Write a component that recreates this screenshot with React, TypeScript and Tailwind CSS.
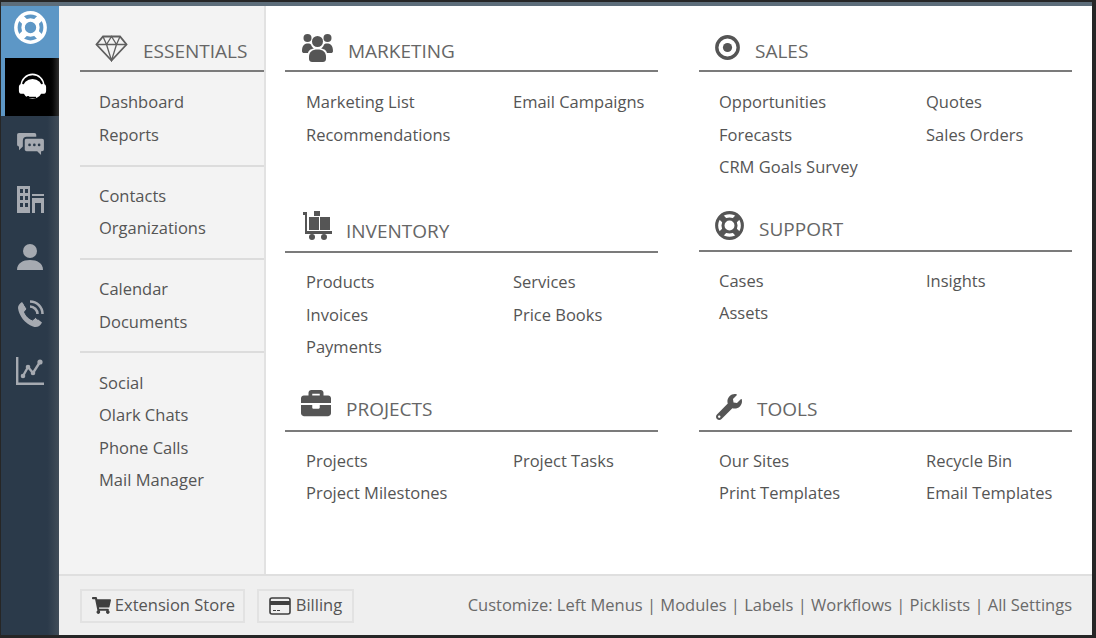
import React from "react";
import { FaBriefcase, FaShoppingCart, FaWrench } from "react-icons/fa";

const LifeRingIcon = ({ className }: { className: string }) => (
  <svg viewBox="0 0 32 32" className={className} fill="none" stroke="currentColor">
    <circle cx="16" cy="16" r="14.2" strokeWidth="3.4" />
    <circle cx="16" cy="16" r="7.2" strokeWidth="3.4" />
    <path d="M6 6 L11 11 M26 6 L21 11 M6 26 L11 21 M26 26 L21 21" strokeWidth="6.5" />
  </svg>
);

const HeadsetIcon = () => (
  <svg viewBox="0 0 32 32" className="w-[29px] h-[29px]">
    <path d="M3.5 14 A12.5 12.5 0 0 1 28.5 14" fill="none" stroke="#fff" strokeWidth="1.7" />
    <circle cx="16" cy="17.5" r="11" fill="#fff" />
    <rect x="1" y="12" width="7" height="11" rx="3.5" fill="#fff" />
    <rect x="24" y="12" width="7" height="11" rx="3.5" fill="#fff" />
    <path d="M11 27 H20" stroke="#000" strokeWidth="1.5" />
    <circle cx="11" cy="27" r="1.6" fill="#000" />
  </svg>
);

const ChatIcon = () => (
  <svg viewBox="0 0 30 24" className="w-[29px] h-[23px]" fill="#a6aab1">
    <path d="M3 1 H19 C20.5 1 21 2 21 3 V5 H11 C8.5 5 7 6.5 7 9 V15 L3 19 V15 C1.5 15 1 14 1 13 V3 C1 2 1.5 1 3 1Z" />
    <path d="M11 7 H27 C28.5 7 29 8 29 9 V18 C29 19.5 28 20 27 20 H26 V24 L22 20 H11 C9.5 20 9 19 9 18 V9 C9 8 9.5 7 11 7Z" />
    <circle cx="14" cy="13.5" r="1.4" fill="#2b3a4a" />
    <circle cx="19" cy="13.5" r="1.4" fill="#2b3a4a" />
    <circle cx="24" cy="13.5" r="1.4" fill="#2b3a4a" />
  </svg>
);

const BuildingIcon = () => (
  <svg viewBox="0 0 28 28" className="w-[28px] h-[28px]" fill="#a6aab1">
    <path
      fillRule="evenodd"
      d="M1 1 H14 V28 H1Z M4 4 V8 H7 V4Z M9 4 V8 H12 V4Z M4 11 V15 H7 V11Z M9 11 V15 H12 V11Z M4 18 V22 H7 V18Z M9 18 V22 H12 V18Z"
    />
    <path d="M16 9 H28 V11 H16Z" />
    <path fillRule="evenodd" d="M16 13 H28 V28 H25 V18 H19 V28 H16Z" />
  </svg>
);

const UserIcon = () => (
  <svg viewBox="0 0 28 28" className="w-[28px] h-[28px]" fill="#a6aab1">
    <circle cx="14" cy="8" r="7" />
    <path d="M1 27 C1 20 7 17 14 17 S27 20 27 27Z" />
  </svg>
);

const PhoneIcon = () => (
  <svg viewBox="0 0 28 28" className="w-[28px] h-[28px]">
    <path
      d="M6 2 L11 9 L8.5 12 C10 16 12.5 18.5 16.5 20 L19.5 17.5 L26 22.5 C24 26.5 20.5 28 17 26.5 C9 23.5 3 16 2 8 C2 5.5 3.5 3.5 6 2Z"
      fill="#a6aab1"
    />
    <path d="M8.5 5 L11 9 L8.5 12 C10 16 12.5 18.5 16.5 20 L19.5 17.5 L22 19.5" fill="none" stroke="#2b3a4a" strokeWidth="1" />
    <path d="M14 1.5 C21 1.5 26.5 7 26.5 14 M14 6.5 C18 6.5 21.5 10 21.5 14" fill="none" stroke="#a6aab1" strokeWidth="2.6" />
  </svg>
);

const ChartIcon = () => (
  <svg viewBox="0 0 28 28" className="w-[28px] h-[28px]" fill="none" stroke="#a6aab1">
    <path d="M1.2 0 V26.8 H28" strokeWidth="2.4" />
    <path d="M7 19 L12 10 L17 16 L24 5" strokeWidth="2.4" />
    <g fill="#a6aab1" stroke="none">
      <circle cx="7" cy="19" r="2.3" />
      <circle cx="12" cy="10" r="2.3" />
      <circle cx="17" cy="16" r="2.3" />
      <circle cx="24" cy="5" r="2.6" />
    </g>
  </svg>
);

const GemIcon = () => (
  <svg viewBox="0 0 33 27" className="w-[33px] h-[27px]" fill="none" stroke="#5f5f5f" strokeWidth="1.8">
    <path d="M8 1.5 H25 L31.5 9.5 L16.5 25.5 L1.5 9.5Z" />
    <path d="M1.5 9.5 H31.5 M8 1.5 L11.5 9.5 L16.5 25.5 L21.5 9.5 L25 1.5 M11.5 9.5 L16.5 1.5 L21.5 9.5" strokeWidth="1.3" />
  </svg>
);

const UsersIcon = () => (
  <svg viewBox="0 0 31 29" className="w-[31px] h-[29px]" fill="#555">
    <circle cx="5.5" cy="5" r="4" />
    <circle cx="25.5" cy="5" r="4" />
    <circle cx="15.5" cy="8.5" r="5.5" />
    <path d="M0 18 C0 12 3 10.5 6 10.5 C7.5 10.5 8.5 11 9 11.5 C9.5 13.5 11 15 12 15.5 C8 16 6.5 18 6 20 H2 C1 20 0 19.5 0 18Z" />
    <path d="M31 18 C31 12 28 10.5 25 10.5 C23.5 10.5 22.5 11 22 11.5 C21.5 13.5 20 15 19 15.5 C23 16 24.5 18 25 20 H29 C30 20 31 19.5 31 18Z" />
    <path d="M7 24 C7 19 10 16.5 15.5 16.5 S24 19 24 24 V26 C24 28 22.5 29 21 29 H10 C8.5 29 7 28 7 26Z" />
  </svg>
);

const BullseyeIcon = () => (
  <svg viewBox="0 0 25 25" className="w-[25px] h-[25px]">
    <circle cx="12.5" cy="12.5" r="10.7" fill="none" stroke="#555" strokeWidth="3.4" />
    <circle cx="12.5" cy="12.5" r="4.6" fill="#555" />
  </svg>
);

const DollyIcon = () => (
  <svg viewBox="0 0 29 29" className="w-[29px] h-[29px]" fill="#555">
    <path d="M0 1 H4 V20 H29 V23 H2 V4 H0Z" />
    <rect x="11" y="0" width="6" height="5" />
    <rect x="6" y="6" width="10" height="13" />
    <rect x="17" y="6" width="10" height="13" />
    <circle cx="9" cy="26" r="3" />
    <circle cx="21" cy="26" r="3" />
  </svg>
);

const CardIcon = () => (
  <svg viewBox="0 0 22 18" className="w-[22px] h-[18px]">
    <rect x="1" y="1" width="20" height="16" rx="2" fill="none" stroke="#3f3f3f" strokeWidth="1.6" />
    <rect x="1" y="4" width="20" height="4" fill="#3f3f3f" />
    <rect x="4" y="13" width="3" height="1" fill="#3f3f3f" />
    <rect x="8" y="13" width="3" height="1" fill="#3f3f3f" />
  </svg>
);

type GroupProps = {
  title: string;
  icon: React.ReactNode;
  iconBox: string;
  titleBox: string;
  listBox: string;
  height: string;
  items: string[];
};

const Group = ({ title, icon, iconBox, titleBox, listBox, height, items }: GroupProps) => (
  <div className={height}>
    <div className="h-[66px] flex items-end border-b-2 border-[#7b7b7b] pb-[5px]">
      <div className={iconBox}>{icon}</div>
      <span className={`text-[19px] leading-[26px] text-[#666] ${titleBox}`}>{title}</span>
    </div>
    <div className={`grid grid-cols-[207px_1fr] text-[16.5px] leading-[32.5px] text-[#555] ${listBox}`}>
      {items.map((item) => (
        <div key={item}>{item}</div>
      ))}
    </div>
  </div>
);

const essentials = [
  ["Dashboard", "Reports"],
  ["Contacts", "Organizations"],
  ["Calendar", "Documents"],
  ["Social", "Olark Chats", "Phone Calls", "Mail Manager"],
];

const blockPadding = [
  "pt-[14px] pb-[14px]",
  "pt-[12.75px] pb-[13.25px]",
  "pt-[13px] pb-[13px]",
  "pt-[13.75px]",
];

const App = () => {
  return (
    <div
      className="w-[1096px] h-[638px] bg-[#262626] pt-[2px] pl-[1px] pr-[4px] pb-[3px] flex"
      style={{ fontFamily: '"Open Sans", sans-serif' }}
    >
      <div className="flex-1 flex flex-col border-t-[4px] border-[#5d6d7a] bg-white">
        <div className="flex-1 flex">
          {/* sidebar */}
          <div className="w-[58px] bg-gradient-to-r from-[#2b3a4a] from-80% to-[#414d59]">
            <div className="h-[52px] bg-[#5d97c6] flex justify-center pt-[5px]">
              <LifeRingIcon className="w-[33px] h-[33px] text-white" />
            </div>
            <div className="h-[58px] border-l-4 border-[#5d97c6] bg-gradient-to-r from-black from-80% to-[#2e2e2e] flex items-center justify-center">
              <HeadsetIcon />
            </div>
            <div className="h-[54px] flex items-center justify-center">
              <ChatIcon />
            </div>
            <div className="h-[58px] flex items-center justify-center">
              <BuildingIcon />
            </div>
            <div className="h-[57px] flex items-center justify-center">
              <UserIcon />
            </div>
            <div className="h-[57px] flex items-center justify-center">
              <PhoneIcon />
            </div>
            <div className="h-[57px] flex items-center justify-center">
              <ChartIcon />
            </div>
          </div>

          {/* essentials panel */}
          <div className="w-[207px] bg-[#f3f3f3] border-r-2 border-[#e2e2e2] pl-[21px] shrink-0">
            <div className="h-[66px] flex items-end border-b-2 border-[#7b7b7b] pb-[5px]">
              <div className="ml-[15px] mr-[15px] mb-[3px]">
                <GemIcon />
              </div>
              <span className="text-[19px] leading-[26px] mb-[1px] text-[#666]">ESSENTIALS</span>
            </div>
            {essentials.map((block, i) => (
              <div
                key={block[0]}
                className={`pl-[19px] text-[16.5px] leading-[32.5px] text-[#555] ${blockPadding[i]} ${
                  i < essentials.length - 1 ? "border-b-2 border-[#dcdcdc]" : ""
                }`}
              >
                {block.map((item) => (
                  <div key={item}>{item}</div>
                ))}
              </div>
            ))}
          </div>

          {/* module groups */}
          <div className="flex-1 flex gap-[41px] pl-[19px] pr-[20px]">
            <div className="w-[373px]">
              <Group
                title="MARKETING"
                icon={<UsersIcon />}
                iconBox="ml-[17px] mr-[15px] mb-[3px]"
                titleBox="mb-[1px]"
                listBox="pl-[21px] pt-[14px]"
                height="h-[181px]"
                items={["Marketing List", "Email Campaigns", "Recommendations"]}
              />
              <Group
                title="INVENTORY"
                icon={<DollyIcon />}
                iconBox="ml-[18px] mr-[14px] mb-[6px]"
                titleBox="mb-[2px]"
                listBox="pl-[21px] pt-[13px]"
                height="h-[179px]"
                items={["Products", "Services", "Invoices", "Price Books", "Payments"]}
              />
              <Group
                title="PROJECTS"
                icon={<FaBriefcase className="w-[30px] h-[30px] text-[#555]" />}
                iconBox="ml-[16px] mr-[15px] mb-[7px]"
                titleBox="mb-[3px]"
                listBox="pl-[21px] pt-[12.75px]"
                height="h-[140px]"
                items={["Projects", "Project Tasks", "Project Milestones"]}
              />
            </div>
            <div className="w-[373px]">
              <Group
                title="SALES"
                icon={<BullseyeIcon />}
                iconBox="ml-[16px] mr-[15px] mb-[5px]"
                titleBox="mb-[1px]"
                listBox="pl-[20px] pt-[14px]"
                height="h-[180px]"
                items={["Opportunities", "Quotes", "Forecasts", "Sales Orders", "CRM Goals Survey"]}
              />
              <Group
                title="SUPPORT"
                icon={<LifeRingIcon className="w-[29px] h-[29px] text-[#555]" />}
                iconBox="ml-[16px] mr-[15px] mb-[5px]"
                titleBox="mb-[3px]"
                listBox="pl-[20px] pt-[12.75px]"
                height="h-[180px]"
                items={["Cases", "Insights", "Assets"]}
              />
              <Group
                title="TOOLS"
                icon={<FaWrench className="w-[26px] h-[26px] text-[#555]" />}
                iconBox="ml-[17px] mr-[15px] mb-[5px]"
                titleBox="mb-[3px]"
                listBox="pl-[20px] pt-[12.75px]"
                height="h-[140px]"
                items={["Our Sites", "Recycle Bin", "Print Templates", "Email Templates"]}
              />
            </div>
          </div>
        </div>

        {/* footer */}
        <div className="flex h-[61px]">
          <div className="w-[58px] bg-gradient-to-r from-[#2b3a4a] from-80% to-[#414d59]" />
          <div className="flex-1 bg-[#efefef] border-t-2 border-[#dfdfdf] flex items-center pl-[21px] pr-[20px] text-[#555]">
            <div className="h-[34px] w-[165px] border-2 border-[#e2e2e2] flex items-center justify-center gap-[4px] pl-[2px] text-[16.5px]">
              <FaShoppingCart className="w-[19px] h-[17px] text-[#3f3f3f]" />
              <span>Extension Store</span>
            </div>
            <div className="h-[34px] w-[97px] ml-[12px] border-2 border-[#e2e2e2] flex items-center justify-center gap-[5px] text-[16.5px]">
              <CardIcon />
              <span>Billing</span>
            </div>
            <div className="ml-auto text-[16.5px] text-[#6a6a6a]">
              Customize: Left Menus | Modules | Labels | Workflows | Picklists | All Settings
            </div>
          </div>
        </div>
      </div>
    </div>
  );
};

export default App;
